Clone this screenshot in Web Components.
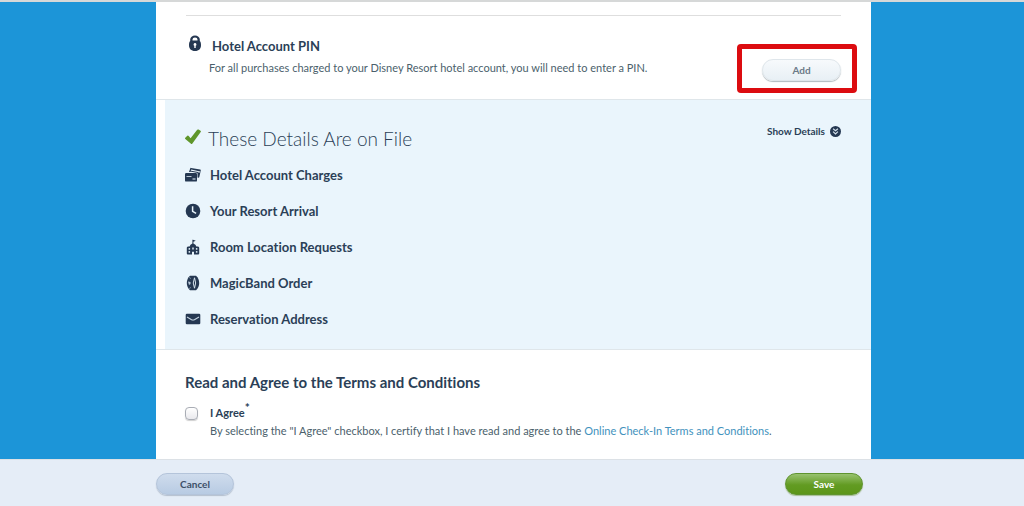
<!DOCTYPE html>
<html lang="en">
<head>
<meta charset="utf-8">
<title>Online Check-In</title>
<style>
body { margin: 0; background: #1c95d8; color: #2b3f57; font-family: Lato, "Open Sans", sans-serif; font-variant-ligatures: none; }
</style>
</head>
<body>
<check-in-page></check-in-page>

<script>
const define = (name, html, setup) => {
  const template = document.createElement('template');
  template.innerHTML = html;
  customElements.define(name, class extends HTMLElement {
    constructor() {
      super();
      this.attachShadow({ mode: 'open' }).append(template.content.cloneNode(true));
    }
    connectedCallback() { if (setup) setup(this, this.shadowRoot); }
  });
};

const icons = {
  lock: '<path fill-rule="evenodd" d="M3.2 6V4.6a4.8 4.2 0 0 1 9.6 0V6C13.8 7 14 8.500 14 10.200 14 13.500 12 16 8 16S2 13.500 2 10.200C2 8.500 2.200 7 3.200 6ZM5.500 5.600h5V4.600a2.500 2.200 0 0 0-5 0ZM8 8a1.500 1.500 0 0 0-.7 2.800V13h1.400v-2.200A1.500 1.500 0 0 0 8 8Z"/>',
  check: '<path fill="#5f962b" d="M.3 8.800 2.300 6.800q.7-.6 1.400.1l1.900 2.300L12.200.8q.6-.7 1.400-.2l1.900 1.200q.7.5.2 1.300L7.400 14.600q-.8 1-1.700 0L.3 10.100q-.6-.600 0-1.300Z"/>',
  cards: '<path d="m4 5 1.200-3.600q.2-.7.900-.5l9 1.700q.8.200.7.900l-1.500 6.500q-.2.800-1 .7l-.8-.2V6.200q0-1-1-1L15 5.400l.2-1L6.200 2.500 5.300 5Z"/><path d="m5 4 8 1.500" stroke="#253852"/><path fill-rule="evenodd" d="M1.200 6h9.600q1.200 0 1.200 1.200V13.400q0 1.200-1.200 1.200H1.200Q0 14.600 0 13.400V7.200Q0 6 1.200 6ZM1.500 9v.8h5V9ZM7.500 11.500v1.100h3v-1.100Z"/>',
  clock: '<circle cx="8" cy="8" r="7.300"/><path d="M7.600 3.300v5.100l3.500 2" fill="none" stroke="#eaf5fc" stroke-width="1.500"/>',
  resort: '<path d="M7.400.8H8l2.800 1-2.400 1V4.500q2.500.8 3 3H13q1.200.2 1.200 1.300V14.500q0 1-1 1H9v-2.500q-1-1.200-2 0v2.500H2.800q-1 0-1-1V8.800q0-1.100 1.200-1.300h1.600Q5 5.300 7.400 4.500Z"/><path d="M3.600 9h1.500v1.700H3.600Zm0 3h1.500v1.700H3.600ZM7.200 8.500h1.600v2H7.200Zm3.700.5h1.500v1.700h-1.500Zm0 3h1.500v1.700h-1.500Z" fill="#d0dfea"/>',
  band: '<path d="M5 .7h6Q14.200 3.500 14.200 8T11 15.300H5Q1.800 12.500 1.800 8T5 .7Z"/><path d="M9.500 2.800Q7 8 9.500 13.200 11.800 8 9.500 2.800Z" fill="none" stroke="#d5e2ec"/><path d="M3 6.500 5.500 7v2L4 10Z" fill="#b9c9d8"/><path d="m4.300 2.500 1.500 1M4.300 13.500l1.500-1" stroke="#8b9db0"/>',
  mail: '<rect x=".7" y="2.700" width="14.600" height="10.600" rx="1.200"/><path d="m2 6 4.600 2.700q1.400.6 2.800 0L14 6" fill="none" stroke="#c7d6e3" stroke-width="1.100"/>',
  chevrons: '<circle cx="8" cy="8" r="8"/><path d="m4.500 4 3.500 3 3.500-3M4.500 8.200 8 11.500l3.500-3.300" fill="none" stroke="#d5e2ec" stroke-width="1.700"/>'
};

define('ui-icon', `
  <style>
    :host { display: inline-flex; flex: none; width: 16px; height: 16px; }
    :host([size="small"]) { width: 11px; height: 11px; }
    svg { width: 100%; height: 100%; fill: #253852; }
  </style>
  <svg viewBox="0 0 16 16" aria-hidden="true"></svg>
`, (host, root) => { root.querySelector('svg').innerHTML = icons[host.getAttribute('name')]; });

define('pill-button', `
  <style>
    :host { display: block; }
    button {
      display: block; width: 79px; height: 22px; padding: 0; border: 1px solid #dfe6eb; border-radius: 11px;
      background: linear-gradient(#f7fafc, #e8f0f5); box-shadow: 0 1px 1px #b0babf;
      color: #6b7a88; font: bold 10px/20px Lato, "Open Sans", sans-serif; cursor: pointer;
    }
    :host([kind="cancel"]) button { width: 78px; border-color: #b4c4da; background: linear-gradient(#cfdced, #b8cbe3); box-shadow: 0 1px 1px #b4bfce; color: #3d5068; }
    :host([kind="save"]) button { width: 78px; border-color: #5f942f; background: linear-gradient(#98c26f, #629b22 55%, #5c961a); box-shadow: 0 1px 1px #a5bc91; color: #fff; }
  </style>
  <button type="button"><slot></slot></button>
`);

define('attention-frame', `
  <style>
    :host { display: block; position: relative; }
    span { position: absolute; inset: -15px -16px -12px -25px; border: 5px solid #dc0c10; border-radius: 4px; pointer-events: none; }
  </style>
  <slot></slot><span></span>
`);

define('account-pin', `
  <style>
    :host { display: block; padding: 13px 30px 0; background: #fff; border-bottom: 1px solid #dfe6ea; }
    section { display: flex; justify-content: space-between; border-top: 1px solid #dedede; padding-bottom: 18px; }
    .title { display: flex; gap: 9px; padding: 19px 0 0 1px; }
    h2 { margin: 3px 0 0; font-size: 13px; line-height: 16px; }
    p { margin: 6px 0 0 23px; font-size: 11px; line-height: 16px; color: #4b5f6c; }
    attention-frame { margin-top: 43px; align-self: flex-start; }
  </style>
  <section>
    <div>
      <div class="title"><ui-icon name="lock"></ui-icon><h2>Hotel Account PIN</h2></div>
      <p>For all purchases charged to your Disney Resort hotel account, you will need to enter a PIN.</p>
    </div>
    <attention-frame><pill-button>Add</pill-button></attention-frame>
  </section>
`);

define('detail-item', `
  <style>
    :host { display: flex; align-items: center; gap: 9px; font-weight: bold; font-size: 13px; line-height: 16px; }
  </style>
  <ui-icon></ui-icon><slot></slot>
`, (host, root) => {
  const icon = document.createElement('ui-icon');
  icon.setAttribute('name', host.getAttribute('icon'));
  root.querySelector('ui-icon').replaceWith(icon);
});

define('details-on-file', `
  <style>
    :host { display: block; padding: 23px 30px 22px 20px; background: #eaf5fc; border-left: 9px solid #fff; }
    header { display: flex; justify-content: space-between; align-items: flex-start; margin-bottom: 16px; }
    .title { display: flex; align-items: center; gap: 7px; }
    h1 { margin: 4px 0 0; font-size: 19px; line-height: 24px; font-weight: 300; }
    a { display: flex; align-items: center; gap: 5px; color: #2b3f57; font-size: 10px; font-weight: bold; line-height: 16px; text-decoration: none; }
    .list { display: grid; gap: 20px; }
  </style>
  <header>
    <div class="title"><ui-icon name="check"></ui-icon><h1>These Details Are on File</h1></div>
    <a href="#details">Show Details <ui-icon name="chevrons" size="small"></ui-icon></a>
  </header>
  <div class="list">
    <detail-item icon="cards">Hotel Account Charges</detail-item>
    <detail-item icon="clock">Your Resort Arrival</detail-item>
    <detail-item icon="resort">Room Location Requests</detail-item>
    <detail-item icon="band">MagicBand Order</detail-item>
    <detail-item icon="mail">Reservation Address</detail-item>
  </div>
`);

define('terms-agreement', `
  <style>
    :host { display: block; padding: 22px 30px 19px 29px; background: #fff; border-top: 1px solid #dfe6ea; }
    h2 { margin: 0 0 12px; font-size: 15px; line-height: 20px; }
    .row { display: flex; gap: 12px; }
    input { appearance: none; box-sizing: border-box; flex: none; width: 13px; height: 13px; margin: 3px 0 0; border: 1px solid #a9adb5; border-radius: 4px; background: linear-gradient(#fff, #e9e9ed); box-shadow: 0 1px 1px #d0d0d0; }
    input:checked { background: #5f962b; }
    label { display: block; font-size: 11px; font-weight: bold; line-height: 18px; }
    sup { font-size: 12px; line-height: 0; }
    p { margin: 0; font-size: 11px; line-height: 18px; color: #4b5f6c; }
    a { color: #4292bd; text-decoration: none; }
  </style>
  <h2>Read and Agree to the Terms and Conditions</h2>
  <div class="row">
    <input type="checkbox" id="agree">
    <div>
      <label for="agree">I Agree<sup>*</sup></label>
      <p>By selecting the "I Agree" checkbox, I certify that I have read and agree to the <a href="#terms">Online Check-In Terms and Conditions</a>.</p>
    </div>
  </div>
`);

define('action-bar', `
  <style>
    :host { display: block; flex: 1; padding-left: 3px; background: #e5edf7; border-top: 1px solid #dce1e6; }
    div { display: flex; justify-content: space-between; box-sizing: border-box; max-width: 715px; margin: 0 auto; padding: 13px 8px 8px 0; }
  </style>
  <div><pill-button kind="cancel">Cancel</pill-button><pill-button kind="save">Save</pill-button></div>
`);

define('check-in-page', `
  <style>
    :host { display: flex; flex-direction: column; box-sizing: border-box; min-height: 100vh; border-top: 2px solid #d6d8d8; }
    .wrap { padding-left: 3px; }
    main { max-width: 715px; margin: 0 auto; background: #fff; }
  </style>
  <div class="wrap">
    <main>
      <account-pin></account-pin>
      <details-on-file></details-on-file>
      <terms-agreement></terms-agreement>
    </main>
  </div>
  <action-bar></action-bar>
`);
</script>
</body>
</html>
